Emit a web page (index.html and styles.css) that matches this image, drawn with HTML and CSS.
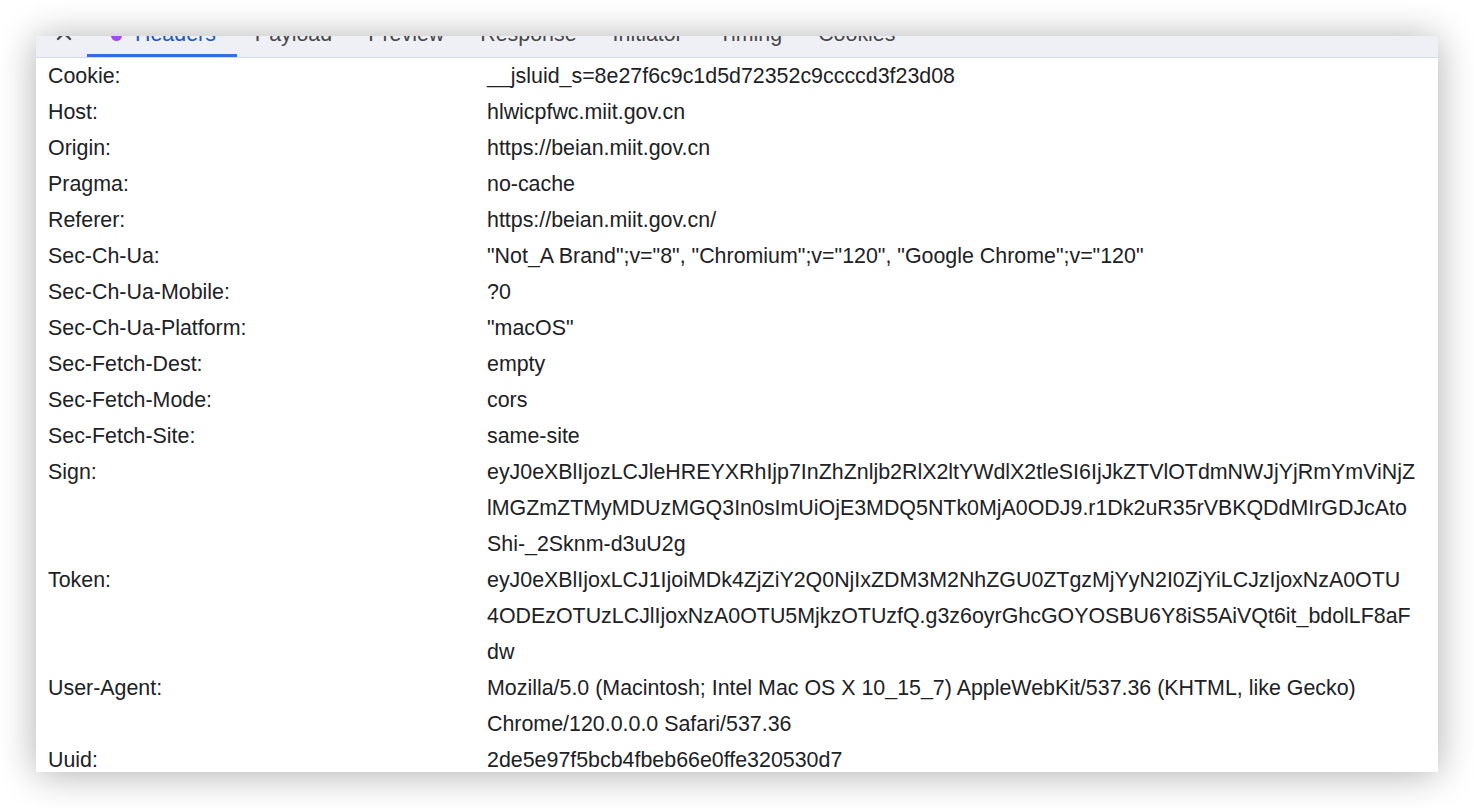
FILE: index.html
```html
<!DOCTYPE html>
<html lang="en">
<head>
<meta charset="utf-8">
<title>Headers</title>
<link rel="stylesheet" href="styles.css">
</head>
<body>
<div class="panel">
  <div class="tabbar">
    <div class="close">
      <svg width="18" height="18" viewBox="0 0 18 18"><path d="M3 3 L15 15 M15 3 L3 15" stroke="#474747" stroke-width="2.4" stroke-linecap="round" fill="none"/></svg>
    </div>
    <div class="tab active"><span class="dot"></span><span class="label">Headers</span></div>
    <div class="tab"><span class="label">Payload</span></div>
    <div class="tab"><span class="label">Preview</span></div>
    <div class="tab"><span class="label">Response</span></div>
    <div class="tab"><span class="label">Initiator</span></div>
    <div class="tab"><span class="label">Timing</span></div>
    <div class="tab"><span class="label">Cookies</span></div>
  </div>
  <div class="rows">
    <div class="k">Cookie:</div><div class="v">__jsluid_s=8e27f6c9c1d5d72352c9ccccd3f23d08</div>
    <div class="k">Host:</div><div class="v">hlwicpfwc.miit.gov.cn</div>
    <div class="k">Origin:</div><div class="v">https://beian.miit.gov.cn</div>
    <div class="k">Pragma:</div><div class="v">no-cache</div>
    <div class="k">Referer:</div><div class="v">https://beian.miit.gov.cn/</div>
    <div class="k">Sec-Ch-Ua:</div><div class="v">"Not_A Brand";v="8", "Chromium";v="120", "Google Chrome";v="120"</div>
    <div class="k">Sec-Ch-Ua-Mobile:</div><div class="v">?0</div>
    <div class="k">Sec-Ch-Ua-Platform:</div><div class="v">"macOS"</div>
    <div class="k">Sec-Fetch-Dest:</div><div class="v">empty</div>
    <div class="k">Sec-Fetch-Mode:</div><div class="v">cors</div>
    <div class="k">Sec-Fetch-Site:</div><div class="v">same-site</div>
    <div class="k">Sign:</div><div class="v">eyJ0eXBlIjozLCJleHREYXRhIjp7InZhZnljb2RlX2ltYWdlX2tleSI6IjJkZTVlOTdmNWJjYjRmYmViNjZ<br>lMGZmZTMyMDUzMGQ3In0sImUiOjE3MDQ5NTk0MjA0ODJ9.r1Dk2uR35rVBKQDdMIrGDJcAto<br>Shi-_2Sknm-d3uU2g</div>
    <div class="k">Token:</div><div class="v">eyJ0eXBlIjoxLCJ1IjoiMDk4ZjZiY2Q0NjIxZDM3M2NhZGU0ZTgzMjYyN2I0ZjYiLCJzIjoxNzA0OTU<br>4ODEzOTUzLCJlIjoxNzA0OTU5MjkzOTUzfQ.g3z6oyrGhcGOYOSBU6Y8iS5AiVQt6it_bdolLF8aF<br>dw</div>
    <div class="k">User-Agent:</div><div class="v">Mozilla/5.0 (Macintosh; Intel Mac OS X 10_15_7) AppleWebKit/537.36 (KHTML, like Gecko)<br>Chrome/120.0.0.0 Safari/537.36</div>
    <div class="k">Uuid:</div><div class="v">2de5e97f5bcb4fbeb66e0ffe320530d7</div>
  </div>
</div>
</body>
</html>
```

FILE: styles.css
```css
html, body {
  margin: 0;
  padding: 0;
  background: #ffffff;
}
body {
  font-family: "Liberation Sans", Arial, sans-serif;
  color: #202124;
  overflow: hidden;
  height: 808px;
}
.panel {
  margin: 36px 36px 0 36px;
  height: 736px;
  background: #ffffff;
  overflow: hidden;
  box-shadow: 0 2px 36px rgba(0, 0, 0, 0.32);
}
.tabbar {
  display: flex;
  height: 21px;
  background: #eef0f5;
  border-bottom: 1px solid #d3dcec;
  overflow: hidden;
  font-size: 21.4px;
  line-height: 22px;
}
.close {
  width: 51px;
  display: flex;
  justify-content: center;
  align-items: flex-start;
}
.close svg {
  margin-top: -12px;
  margin-left: 4px;
}
.tab {
  display: flex;
  align-items: flex-start;
  height: 21px;
  box-sizing: border-box;
  padding: 0 18px;
  color: #474747;
}
.tab .label {
  margin-top: -13px;
}
.tab.active {
  padding: 0 21px 0 24px;
  color: #1a56cf;
  border-bottom: 3px solid #2e6ee8;
}
.dot {
  width: 11px;
  height: 11px;
  border-radius: 50%;
  background: #a347f0;
  margin-right: 13px;
  margin-top: -6px;
}
.rows {
  display: grid;
  grid-template-columns: 439px 1fr;
  padding-left: 12px;
  font-size: 21.4px;
  line-height: 36px;
}
.k, .v {
  white-space: nowrap;
}
```
